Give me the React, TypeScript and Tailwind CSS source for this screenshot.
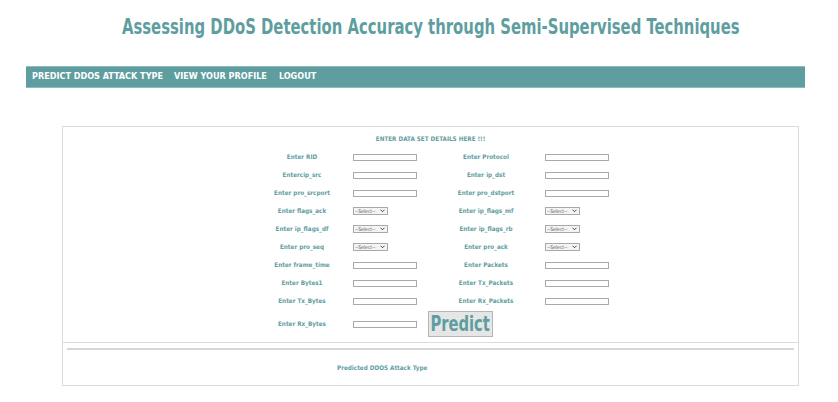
const fields: [string, "input" | "select", string, "input" | "select"][] = [
  ["Enter RID", "input", "Enter Protocol", "input"],
  ["Entercip_src", "input", "Enter ip_dst", "input"],
  ["Enter pro_srcport", "input", "Enter pro_dstport", "input"],
  ["Enter flags_ack", "select", "Enter ip_flags_mf", "select"],
  ["Enter ip_flags_df", "select", "Enter ip_flags_rb", "select"],
  ["Enter pro_seq", "select", "Enter pro_ack", "select"],
  ["Enter frame_time", "input", "Enter Packets", "input"],
  ["Enter Bytes1", "input", "Enter Tx_Packets", "input"],
  ["Enter Tx_Bytes", "input", "Enter Rx_Packets", "input"],
];

function Field({ kind }: { kind: "input" | "select" }) {
  if (kind === "input") {
    return (
      <input
        type="text"
        className="block h-[7px] w-[64px] border border-[#a9a9a9] bg-white p-0 outline-none"
      />
    );
  }
  // tiny native-looking select
  return (
    <div className="flex h-[8px] w-[35px] items-center justify-between border border-[#a9a9a9] bg-[#f4f4f4] px-[1px] text-[5px] font-normal leading-none text-[#555]">
      <span>--Select--</span>
      <svg width="5" height="4" viewBox="0 0 10 8" className="mr-[1px]">
        <path d="M1 1.5 L5 5.5 L9 1.5" stroke="#444" strokeWidth="2" fill="none" />
      </svg>
    </div>
  );
}

export default function App() {
  return (
    <div className="h-[402px] w-[838px] overflow-hidden bg-white font-['DejaVu_Sans_Condensed','Liberation_Sans',sans-serif]">
      <h1 className="flex justify-center pl-[24px] pt-[14px] text-[22px] font-bold leading-[26px] text-[#5f9ea0]">
        <span className="inline-block shrink-0 origin-center scale-x-[0.75] whitespace-nowrap">
          Assessing DDoS Detection Accuracy through Semi-Supervised Techniques
        </span>
      </h1>

      <nav className="ml-[26px] mt-[26px] flex h-[22px] w-[779px] items-center gap-[11px] border-y border-[#8dbbbd] bg-[#5f9ea0] pl-[6px] text-[9px] font-bold uppercase text-white">
        <a href="#">Predict DDOS Attack Type</a>
        <a href="#" className="mr-[1px]">View Your Profile</a>
        <a href="#">Logout</a>
      </nav>

      <div className="ml-[62px] mt-[38px] w-[737px] border border-[#dcdcdc] text-[6.3px] font-bold text-[#5f9ea0]">
        <div className="border-b border-[#dcdcdc] pb-[4px]">
          <div className="pt-[7px] text-center leading-[10px]">ENTER DATA SET DETAILS HERE !!!</div>
          <div className="ml-[189px] mt-[4px] grid grid-cols-[100px_74px_120px_74px]">
            {fields.map(([l1, k1, l2, k2]) => (
              <div key={l1} className="contents">
                <div className="flex h-[18px] items-center justify-center">{l1}</div>
                <div className="flex h-[18px] items-center pl-[1px]">
                  <Field kind={k1} />
                </div>
                <div className="flex h-[18px] items-center justify-center">{l2}</div>
                <div className="-ml-[1px] flex h-[18px] items-center">
                  <Field kind={k2} />
                </div>
              </div>
            ))}
            <div className="flex h-[28px] items-center justify-center">Enter Rx_Bytes</div>
            <div className="flex h-[28px] items-center pl-[1px]">
              <Field kind="input" />
            </div>
            <div className="flex h-[28px] items-center pl-[2px]">
              <button className="flex h-[26px] w-[65px] items-center justify-center border border-[#b5b5b5] bg-[#e6e6e6] text-[21px] font-bold leading-none text-[#5f9ea0]">
                <span className="inline-block scale-x-[0.78]">Predict</span>
              </button>
            </div>
            <div />
          </div>
        </div>
        <div className="h-[42px] px-[4px] pt-[5px]">
          <div className="h-[2px] bg-[#d6d6d6]" />
          <div className="ml-[270px] mt-[13px] leading-[10px]">Predicted DDOS Attack Type</div>
        </div>
      </div>
    </div>
  );
}
